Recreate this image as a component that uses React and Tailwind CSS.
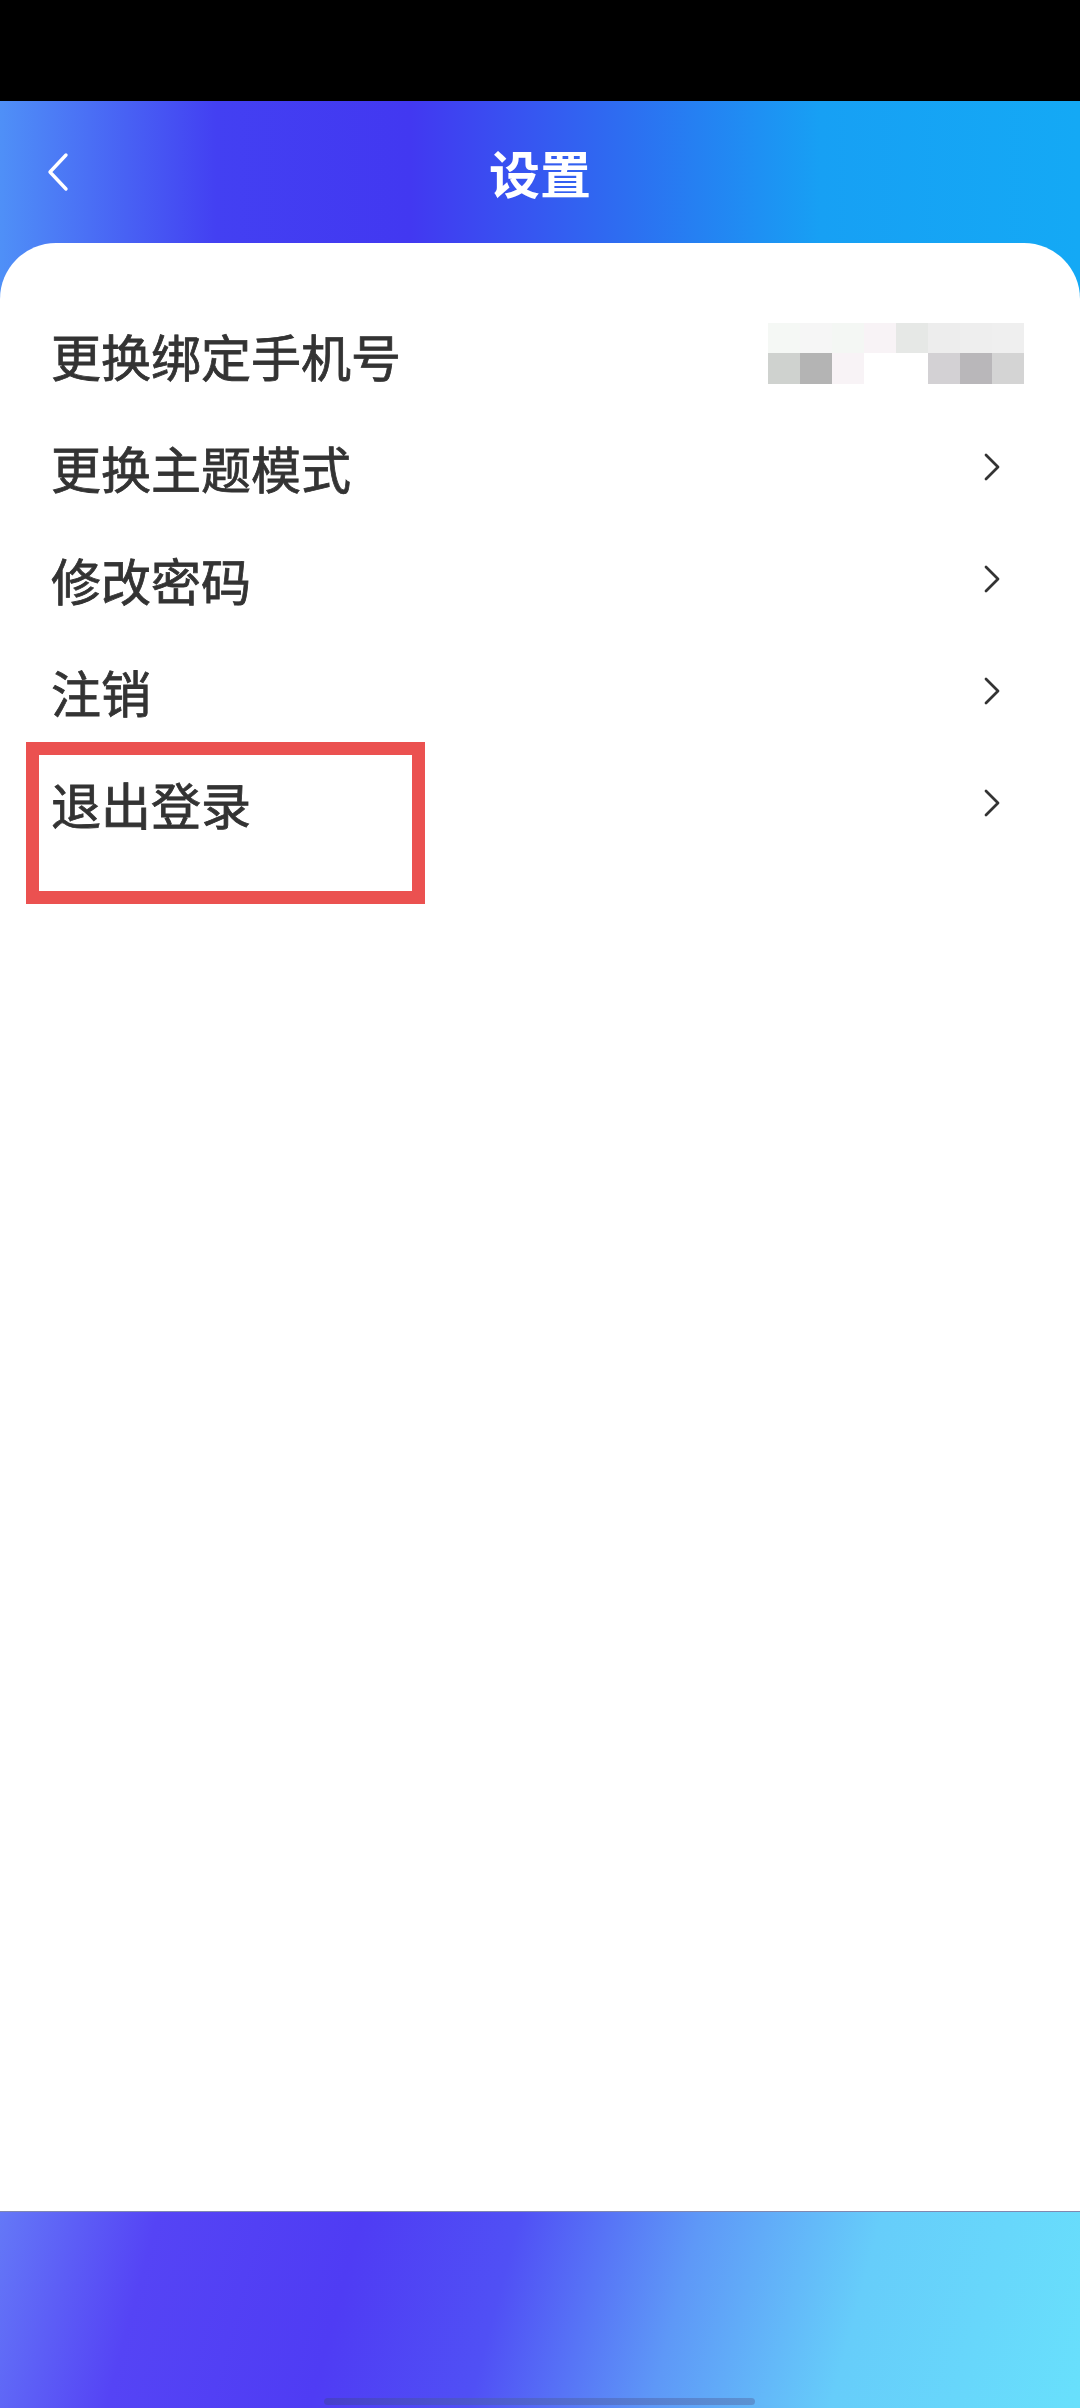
import React from 'react';

const FONT = { fontFamily: '"Noto Sans CJK SC", "Noto Sans", sans-serif' };

// settings rows
const items = [
    { label: '更换绑定手机号', phone: true },
    { label: '更换主题模式' },
    { label: '修改密码' },
    { label: '注销' },
    { label: '退出登录', marked: true },
];

const Chevron = () => (
    <svg width="20" height="28" viewBox="0 0 20 28" className="mr-[22px]">
        <polyline points="4,2 16,14 4,26" fill="none" stroke="#333333" strokeWidth="2.8" strokeLinecap="round" strokeLinejoin="round" />
    </svg>
);

// pixelated (masked) phone number
const MaskedPhone = () => (
    <div className="grid grid-cols-8 w-[256px] mt-[-4px]">
        <div className="h-[30px] bg-[#f5f8f5]" />
        <div className="h-[30px] bg-[#f6f6f6]" />
        <div className="h-[30px] bg-[#f4f7f4]" />
        <div className="h-[30px] bg-[#f8f3f6]" />
        <div className="h-[30px] bg-[#e6e8e6]" />
        <div className="h-[30px] bg-[#ededed]" />
        <div className="h-[30px] bg-[#eeeeee]" />
        <div className="h-[30px] bg-[#efefef]" />
        <div className="h-[31px] bg-[#cfd2cf]" />
        <div className="h-[31px] bg-[#b4b4b4]" />
        <div className="h-[31px] bg-[#f8f3f6]" />
        <div className="h-[31px] bg-white" />
        <div className="h-[31px] bg-white" />
        <div className="h-[31px] bg-[#d3d1d4]" />
        <div className="h-[31px] bg-[#b9b7ba]" />
        <div className="h-[31px] bg-[#d4d4d4]" />
    </div>
);

const App = () => {
    return (
        <div className="w-[1080px] h-[2408px] flex flex-col overflow-hidden" style={FONT}>
            {/* status bar */}
            <div className="h-[101px] bg-black shrink-0" />

            <div className="flex-1 flex flex-col bg-[linear-gradient(90deg,#4f90f7_0%,#4340f2_20%,#4238f1_38%,#2d6ef1_58%,#17a0f4_76%,#14a9f5_100%)]">
                {/* nav bar */}
                <div className="h-[142px] relative flex items-center justify-center shrink-0">
                    <svg width="26" height="40" viewBox="0 0 26 40" className="absolute left-[45px] top-[51px]">
                        <polyline points="21,3 5,20 21,37" fill="none" stroke="white" strokeWidth="3.4" strokeLinecap="round" strokeLinejoin="round" />
                    </svg>
                    <h1 className="text-white text-[51px] font-bold leading-none">设置</h1>
                </div>

                {/* card */}
                <div className="flex-1 bg-white rounded-t-[56px] pt-[56px]">
                    {items.map((item) => (
                        <div key={item.label} className="relative h-[112px] flex items-center justify-between pl-[51px] pr-[56px]">
                            <span className="text-[50px] leading-none text-[#333333] [-webkit-text-stroke:0.8px_#333333]">{item.label}</span>
                            {item.phone ? <MaskedPhone /> : <Chevron />}
                            {item.marked && (
                                <div className="absolute left-[26px] top-[-5px] w-[399px] h-[162px] border-[13px] border-[#eb5150]" />
                            )}
                        </div>
                    ))}
                </div>
            </div>

            {/* bottom bar */}
            <div className="h-[197px] shrink-0 relative border-t border-[#8088b0] bg-[linear-gradient(105deg,#6478f7_0%,#5544f5_14%,#4f3cf4_32%,#5050f5_46%,#5e98f7_62%,#66cdfa_78%,#68e0fc_100%)]">
                <div className="absolute left-[324px] bottom-[3px] w-[431px] h-[7px] rounded-full bg-[linear-gradient(90deg,#4540c0,#5a8ac8)] opacity-80" />
            </div>
        </div>
    );
};

export default App;
